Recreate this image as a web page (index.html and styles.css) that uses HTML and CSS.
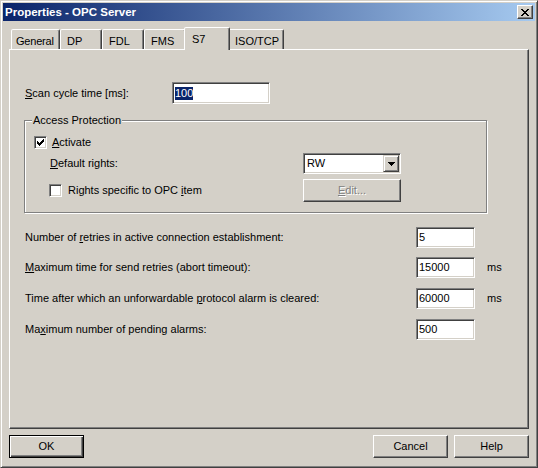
FILE: index.html
```html
<!DOCTYPE html>
<html>
<head>
<meta charset="utf-8">
<title>Properties - OPC Server</title>
<link rel="stylesheet" href="styles.css">
</head>
<body>
<div class="window">
  <div class="titlebar">
    <span class="title">Properties - OPC Server</span>
    <button class="close" aria-label="Close">
      <svg width="8" height="7" viewBox="0 0 8 7" shape-rendering="crispEdges"><path fill="#000" d="M0 0h2v1H0zM6 0h2v1H6zM1 1h2v1H1zM5 1h2v1H5zM2 2h4v1H2zM3 3h2v1H3zM2 4h4v1H2zM1 5h2v1H1zM5 5h2v1H5zM0 6h2v1H0zM6 6h2v1H6z"/></svg>
    </button>
  </div>
  <div class="body">
    <div class="tabs">
      <div class="tab tab-general">General</div>
      <div class="tab">DP</div>
      <div class="tab">FDL</div>
      <div class="tab">FMS</div>
      <div class="tab active">S7</div>
      <div class="tab tab-iso">ISO/TCP</div>
    </div>
    <div class="panel">
      <div class="scan-row">
        <span class="scan-label"><u>S</u>can cycle time [ms]:</span>
        <div class="edit edit-wide"><span class="sel">100</span></div>
      </div>
      <fieldset class="group">
        <legend>Access Protection</legend>
        <div class="check-row activate-row">
          <span class="checkbox"><svg width="7" height="7" viewBox="0 0 7 7" shape-rendering="crispEdges"><path fill="#000" d="M0 2h1v3H0zM1 3h1v3H1zM2 4h1v3H2zM3 3h1v3H3zM4 2h1v3H4zM5 1h1v3H5zM6 0h1v3H6z"/></svg></span>
          <span><u>A</u>ctivate</span>
        </div>
        <div class="sub-row rights-row">
          <span class="sub-label"><u>D</u>efault rights:</span>
          <div class="combo">
            <span class="combo-text">RW</span>
            <span class="drop"><svg width="7" height="4" viewBox="0 0 7 4" shape-rendering="crispEdges"><path fill="#000" d="M0 0h7v1H0zM1 1h5v1H1zM2 2h3v1H2zM3 3h1v1H3z"/></svg></span>
          </div>
        </div>
        <div class="sub-row item-row">
          <div class="check-row">
            <span class="checkbox"></span>
            <span class="item-text">Rights specific to OPC <u>i</u>tem</span>
          </div>
          <button class="btn btn-edit" disabled><u>E</u>dit...</button>
        </div>
      </fieldset>
      <div class="params">
        <div class="param">
          <span class="param-label">Number of <u>r</u>etries in active connection establishment:</span>
          <div class="edit">5</div>
        </div>
        <div class="param param-close">
          <span class="param-label"><u>M</u>aximum time for send retries (abort timeout):</span>
          <div class="edit">15000</div>
          <span class="unit">ms</span>
        </div>
        <div class="param">
          <span class="param-label">Time after which an unforwardable <u>p</u>rotocol alarm is cleared:</span>
          <div class="edit">60000</div>
          <span class="unit">ms</span>
        </div>
        <div class="param">
          <span class="param-label">Ma<u>x</u>imum number of pending alarms:</span>
          <div class="edit">500</div>
        </div>
      </div>
    </div>
    <div class="buttons">
      <button class="btn btn-default">OK</button>
      <span class="spacer"></span>
      <button class="btn">Cancel</button>
      <button class="btn">Help</button>
    </div>
  </div>
</div>
</body>
</html>
```
FILE: styles.css
```css
* {
  box-sizing: border-box;
}

html, body {
  margin: 0;
  padding: 0;
}

body {
  width: 538px;
  height: 468px;
  overflow: hidden;
  background: #d4d0c8;
  font-family: "Liberation Sans", Arial, sans-serif;
  font-size: 11px;
  line-height: 13px;
  color: #000;
}

u {
  text-decoration: underline;
  text-underline-offset: 1px;
}

.window {
  width: 538px;
  height: 468px;
  display: flex;
  flex-direction: column;
  padding: 2px;
  background: #d4d0c8;
  border: 1px solid;
  border-color: #d4d0c8 #404040 #404040 #d4d0c8;
  box-shadow: inset 1px 1px 0 #fff, inset -1px -1px 0 #808080;
}

.titlebar {
  height: 18px;
  flex: none;
  display: flex;
  align-items: center;
  justify-content: space-between;
  padding: 0 2px;
  background: linear-gradient(to right, #0a246a, #a6caf0);
}

.title {
  color: #fff;
  font-weight: bold;
  font-size: 11.5px;
  line-height: 13px;
  white-space: nowrap;
}

.close {
  width: 16px;
  height: 14px;
  padding: 0;
  margin: 0;
  display: flex;
  align-items: center;
  justify-content: center;
  background: #d4d0c8;
  border: 1px solid;
  border-color: #fff #404040 #404040 #fff;
  box-shadow: inset -1px -1px 0 #808080;
}

.body {
  flex: 1;
  display: flex;
  flex-direction: column;
  padding: 6px 6px 7px 6px;
}

.tabs {
  height: 22px;
  flex: none;
  display: flex;
  align-items: flex-end;
  padding-left: 2px;
}

.tab {
  width: 42px;
  height: 20px;
  flex: none;
  padding: 5px 0 0 6px;
  line-height: 13px;
  white-space: nowrap;
  background: #d4d0c8;
  border: 1px solid;
  border-bottom: 0;
  border-color: #fff #404040 transparent #fff;
  border-radius: 2px 2px 0 0;
  box-shadow: inset -1px 0 0 #808080;
}

.tab-general {
  width: 49px;
  padding-left: 4px;
  letter-spacing: -0.2px;
}

.tab-iso {
  width: 56px;
}

.tab.active {
  width: 46px;
  height: 23px;
  margin: 0 -2px -1px -2px;
  padding-left: 7px;
  position: relative;
  z-index: 1;
}

.panel {
  width: 520px;
  height: 380px;
  flex: none;
  display: flex;
  flex-direction: column;
  align-items: flex-start;
  padding: 0 0 0 15px;
  background: #d4d0c8;
  border: 1px solid;
  border-color: #fff #404040 #404040 #fff;
  box-shadow: inset -1px -1px 0 #808080;
}

.scan-row {
  margin-top: 32px;
  height: 22px;
  display: flex;
  align-items: center;
}

.scan-label {
  width: 147px;
  white-space: nowrap;
}

.edit {
  width: 59px;
  height: 21px;
  display: flex;
  align-items: center;
  padding-left: 2px;
  background: #fff;
  border: 1px solid;
  border-color: #808080 #fff #fff #808080;
  box-shadow: inset 1px 1px 0 #404040, inset -1px -1px 0 #d4d0c8;
  white-space: nowrap;
}

.edit-wide {
  width: 98px;
  height: 22px;
}

.sel {
  background: #0a246a;
  color: #fff;
  line-height: 13px;
}

.group {
  width: 463px;
  margin: 10px 0 0 -1px;
  padding: 0 0 10px 9px;
  min-width: 0;
  border: 1px solid #808080;
  box-shadow: inset 1px 1px 0 #fff, 1px 1px 0 #fff;
}

.group legend {
  margin-left: -2px;
  padding: 0 1px;
  line-height: 13px;
  background: #d4d0c8;
}

.check-row {
  display: flex;
  align-items: center;
  gap: 5px;
  white-space: nowrap;
}

.activate-row {
  margin-top: 7px;
  height: 16px;
}

.checkbox {
  width: 13px;
  height: 13px;
  flex: none;
  display: flex;
  align-items: center;
  justify-content: center;
  background: #fff;
  border: 1px solid;
  border-color: #808080 #fff #fff #808080;
  box-shadow: inset 1px 1px 0 #404040, inset -1px -1px 0 #d4d0c8;
}

.item-text {
  margin-left: 1px;
}

.sub-row {
  display: grid;
  grid-template-columns: 254px 98px;
  align-items: center;
  margin-left: 15px;
}

.rights-row {
  margin-top: 3px;
  height: 21px;
}

.item-row {
  margin-top: 5px;
  height: 23px;
}

.sub-label {
  padding-left: 1px;
  white-space: nowrap;
}

.combo {
  width: 98px;
  height: 21px;
  display: flex;
  background: #fff;
  border: 1px solid;
  border-color: #808080 #fff #fff #808080;
  box-shadow: inset 1px 1px 0 #404040, inset -1px -1px 0 #d4d0c8;
}

.combo-text {
  flex: 1;
  display: flex;
  align-items: center;
  padding-left: 3px;
}

.drop {
  width: 16px;
  margin: 1px 1px 1px 0;
  display: flex;
  align-items: center;
  justify-content: center;
  background: #d4d0c8;
  border: 1px solid;
  border-color: #d4d0c8 #404040 #404040 #d4d0c8;
  box-shadow: inset 1px 1px 0 #fff, inset -1px -1px 0 #808080;
}

.btn {
  width: 75px;
  height: 23px;
  padding: 0;
  margin: 0;
  font-family: inherit;
  font-size: 11px;
  line-height: 13px;
  color: #000;
  background: #d4d0c8;
  border: 1px solid;
  border-color: #fff #404040 #404040 #fff;
  box-shadow: inset -1px -1px 0 #808080;
}

.btn-edit {
  width: 98px;
  color: #808080;
  text-shadow: 1px 1px 0 #fff;
}

.btn-default {
  border: 1px solid #000;
  box-shadow: inset 1px 1px 0 #fff, inset -1px -1px 0 #404040, inset -2px -2px 0 #808080;
}

.params {
  margin-top: 14px;
  display: flex;
  flex-direction: column;
}

.param {
  height: 21px;
  display: flex;
  align-items: center;
  margin-top: 10px;
}

.param:first-child {
  margin-top: 0;
}

.param-close {
  margin-top: 9px;
}

.param-label {
  width: 391px;
  white-space: nowrap;
}

.unit {
  margin-left: 12px;
}

.buttons {
  margin-top: 6px;
  height: 23px;
  flex: none;
  display: flex;
  gap: 6px;
}

.spacer {
  flex: 1;
}
```
